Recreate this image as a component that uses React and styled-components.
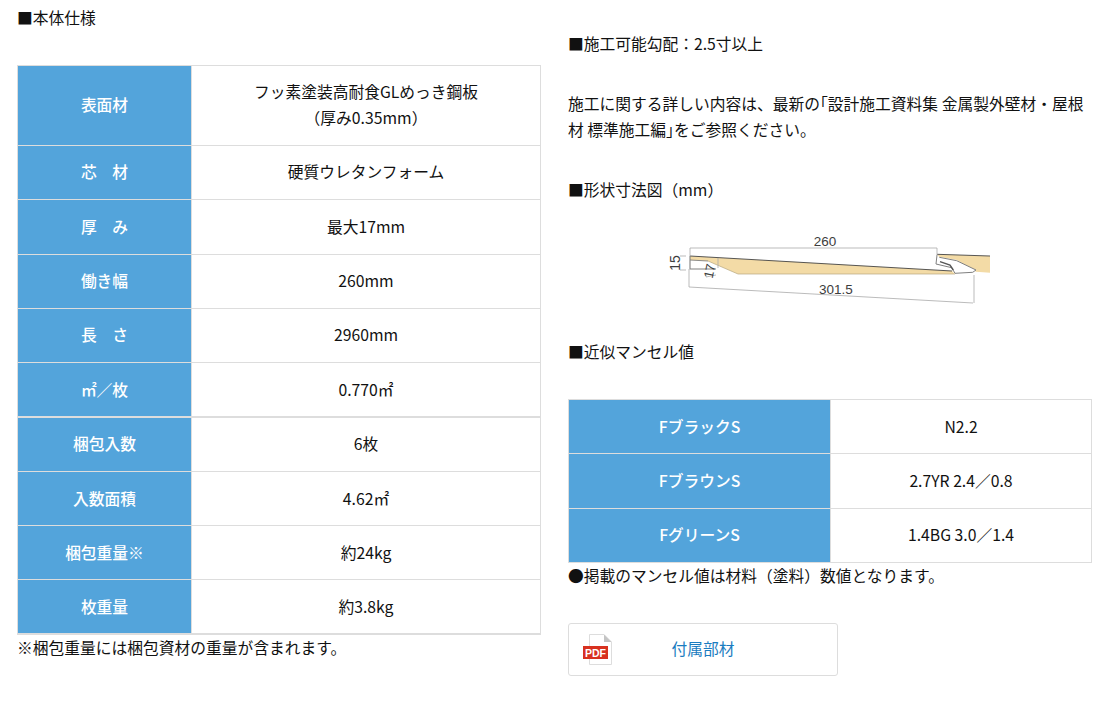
import React from "react";
import styled, { createGlobalStyle } from "styled-components";

const GlobalStyle = createGlobalStyle`
  html, body {
    margin: 0;
    padding: 0;
    background: #fff;
    color: #111;
    font-family: "Noto Sans CJK JP", "Noto Sans", sans-serif;
    font-size: 15.75px;
    line-height: 26px;
  }
`;

const Page = styled.div`
  display: flex;
  gap: 27px;
  width: 1115px;
  height: 706px;
  padding-left: 17px;
  box-sizing: border-box;
  overflow: hidden;
`;

const Column = styled.div`
  width: 524px;
  padding-top: ${({ $top }) => $top}px;
`;

const Text = styled.p`
  margin: ${({ $gap }) => ($gap === undefined ? 34 : $gap)}px 0 0;
`;

const SpecTable = styled.table`
  width: 100%;
  margin-top: 34px;
  border-collapse: collapse;
  table-layout: fixed;
  border: 1px solid #ddd;
`;

const Th = styled.th`
  box-sizing: border-box;
  width: ${({ $w }) => $w}px;
  height: ${({ $h }) => $h}px;
  padding: ${({ $thick }) => ($thick ? 1 : 0)}px 0 ${({ $lift }) => ($lift ? 1 : 0)}px;
  background: #53a4db;
  border: 1px solid #ddd;
  border-bottom-width: ${({ $thick }) => ($thick ? 2 : 1)}px;
  color: #fff;
  font-weight: 500;
  text-align: center;
`;

const Td = styled.td`
  padding: ${({ $thick }) => ($thick ? 1 : 0)}px 0 ${({ $lift }) => ($lift ? 1 : 0)}px;
  border: 1px solid #ddd;
  border-bottom-width: ${({ $thick }) => ($thick ? 2 : 1)}px;
  text-align: center;
`;

const Drawing = styled.svg`
  display: block;
  margin: 22px 0 24px 72px;
`;

const FileLink = styled.a`
  position: relative;
  display: flex;
  align-items: center;
  justify-content: center;
  width: 270px;
  height: 53px;
  margin-top: 34px;
  padding-bottom: 2px;
  box-sizing: border-box;
  border: 1px solid #ddd;
  border-radius: 3px;
  color: #1a7cc0;
  text-decoration: none;
`;

const PdfIcon = styled.svg`
  position: absolute;
  left: 14px;
  top: 9px;
`;

const specRows = [
  { label: "表面材", value: <>フッ素塗装高耐食GLめっき鋼板<br />（厚み0.35mm）</>, height: 80, lift: true },
  { label: "芯　材", value: "硬質ウレタンフォーム", height: 54, lift: true },
  { label: "厚　み", value: "最大17mm", height: 55, lift: true },
  { label: "働き幅", value: "260mm", height: 54, lift: true },
  { label: "長　さ", value: "2960mm", height: 54, lift: true },
  { label: "㎡／枚", value: "0.770㎡", height: 54, thick: true },
  { label: "梱包入数", value: "6枚", height: 55, lift: true },
  { label: "入数面積", value: "4.62㎡", height: 54 },
  { label: "梱包重量※", value: "約24kg", height: 54 },
  { label: "枚重量", value: "約3.8kg", height: 54, thick: true },
];

const colorRows = [
  { label: "FブラックS", value: "N2.2", height: 54 },
  { label: "FブラウンS", value: "2.7YR 2.4／0.8", height: 55, lift: true },
  { label: "FグリーンS", value: "1.4BG 3.0／1.4", height: 54, lift: true },
];

function DataTable({ rows, labelWidth }) {
  return (
    <SpecTable>
      <tbody>
        {rows.map(({ label, value, height, thick, lift }) => (
          <tr key={label}>
            <Th $w={labelWidth} $h={height} $thick={thick} $lift={lift}>{label}</Th>
            <Td $thick={thick} $lift={lift}>{value}</Td>
          </tr>
        ))}
      </tbody>
    </SpecTable>
  );
}

function ProfileDrawing() {
  const dim = { stroke: "#a9a9a9", strokeWidth: 0.8, fill: "none" };
  const label = { fontFamily: "Liberation Sans", fill: "#3d3d3d", textAnchor: "middle" };
  return (
    <Drawing width="380" height="90" viewBox="0 0 380 90">
      {/* panel bodies */}
      <path d="M50 31 L312 46 L315 49 L98 49 L68 36 L50 35 Z" fill="#f3dba6" />
      <path d="M297 29.3 L350 31 L350 47.7 L336 46.7 L317 35 L299 31.7 Z" fill="#f3dba6" />
      <path d="M50 31 L312 46" stroke="#444" strokeWidth="0.9" fill="none" />
      <path d="M297 29.3 L350 31" stroke="#444" strokeWidth="0.9" fill="none" />
      <path d="M68 36 L98 49 L315 49" stroke="#b8a880" strokeWidth="0.7" fill="none" />
      {/* left lip */}
      <path d="M50 31 L50 44 L76 44" stroke="#808080" strokeWidth="1.1" fill="none" />
      <path d="M50 35 L68 36" stroke="#808080" strokeWidth="0.9" fill="none" />
      {/* right joint */}
      <path d="M297 30 L296 39 L311.7 42.7 L315 48.3 L332.7 47.3 L336 45 L316.7 35.7 L299.3 32.3" stroke="#808080" strokeWidth="1" fill="#fff" />
      <path d="M300 36.7 L310 40 L313.3 45" stroke="#555" strokeWidth="1.4" fill="none" />
      {/* dimension lines */}
      <path d="M50 23 L297 23 M50 23 L50 31 M297 23 L297 30 M49 44 L49 62 M49 62 L333 78 M334 50 L334 78" {...dim} />
      <path d="M46 31 L40 31 M46 45 L40 45 M78 33 L78 43 M66 52 L76 50" {...dim} />
      <text x="185" y="21" fontSize="13.5" {...label}>260</text>
      <text x="196" y="69" fontSize="13.5" {...label}>301.5</text>
      <text x="40" y="38" fontSize="14" transform="rotate(-90 40 38)" {...label}>15</text>
      <text x="74" y="47" fontSize="13" transform="rotate(-78 74 47)" {...label}>17</text>
    </Drawing>
  );
}

function FileIcon() {
  return (
    <PdfIcon width="30" height="34" viewBox="0 0 30 34">
      <path d="M6.5 1.5 H21 L28.5 9 V31.5 H6.5 Z" fill="#fff" stroke="#ddd" />
      <path d="M21 1.5 L28.5 9 H21 Z" fill="#c4c4c4" />
      <rect x="0" y="13" width="25" height="13" fill="#d8311f" />
      <text x="12.5" y="23.5" textAnchor="middle" fontFamily="Liberation Sans" fontWeight="700" fontSize="10.5" fill="#fff">PDF</text>
    </PdfIcon>
  );
}

export default function App() {
  return (
    <>
      <GlobalStyle />
      <Page>
        <Column $top={5}>
          <Text $gap={0}>■本体仕様</Text>
          <DataTable rows={specRows} labelWidth={174} />
          <Text $gap={0}>※梱包重量には梱包資材の重量が含まれます。</Text>
        </Column>
        <Column $top={31}>
          <Text $gap={0}>■施工可能勾配：2.5寸以上</Text>
          <Text>施工に関する詳しい内容は、最新の｢設計施工資料集 金属製外壁材・屋根材 標準施工編｣をご参照ください。</Text>
          <Text>■形状寸法図（mm）</Text>
          <ProfileDrawing />
          <Text $gap={0}>■近似マンセル値</Text>
          <DataTable rows={colorRows} labelWidth={262} />
          <Text $gap={0}>●掲載のマンセル値は材料（塗料）数値となります。</Text>
          <FileLink href="#">
            <FileIcon />
            付属部材
          </FileLink>
        </Column>
      </Page>
    </>
  );
}
